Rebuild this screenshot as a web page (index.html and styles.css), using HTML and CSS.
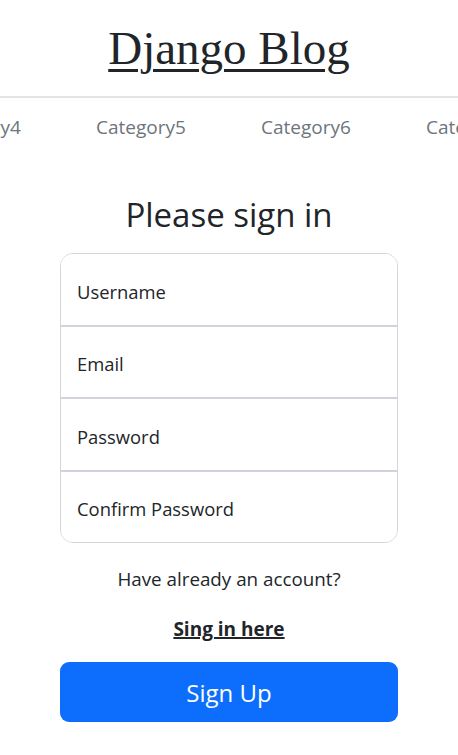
FILE: index.html
```html
<!DOCTYPE html>
<html lang="en">
<head>
<meta charset="utf-8">
<title>Django Blog</title>
<link rel="stylesheet" href="styles.css">
</head>
<body>
<header class="site-header">
  <a class="logo" href="#">Django Blog</a>
</header>
<nav class="cats">
  <div class="cats-track">
    <a href="#">Category4</a>
    <a href="#">Category5</a>
    <a href="#">Category6</a>
    <a href="#">Category7</a>
  </div>
</nav>
<main class="signin">
  <h1 class="signin-title">Please sign in</h1>
  <form class="signin-form">
    <div class="field-group">
      <input class="field" type="text" placeholder="Username">
      <input class="field" type="email" placeholder="Email">
      <input class="field" type="password" placeholder="Password">
      <input class="field" type="password" placeholder="Confirm Password">
    </div>
    <p class="hint">Have already an account?</p>
    <p class="hint-link"><a href="#">Sing in here</a></p>
    <button class="btn-primary" type="submit">Sign Up</button>
  </form>
</main>
</body>
</html>
```
FILE: styles.css
```css
* { box-sizing: border-box; }
html, body { margin: 0; padding: 0; }
body {
  font-family: "Open Sans", "Noto Sans", sans-serif;
  color: #212529;
  background: #fff;
  width: 458px;
  overflow: hidden;
}
.site-header {
  padding: 25px 0 24px;
  text-align: center;
  border-bottom: 2px solid #e4e4e4;
}
.logo {
  font-family: "Liberation Serif", "Times New Roman", serif;
  font-size: 47px;
  line-height: 47px;
  color: #212529;
  text-decoration: underline;
  text-decoration-thickness: 3px;
  text-underline-offset: 5px;
}
.cats {
  overflow: hidden;
  padding: 15px 0 0;
}
.cats-track {
  display: flex;
  margin-left: -69px;
}
.cats-track a {
  flex: 0 0 165px;
  font-size: 19px;
  line-height: 28px;
  color: #6c757d;
  text-decoration: none;
  white-space: nowrap;
}
.signin {
  display: flex;
  flex-direction: column;
  align-items: center;
  padding-top: 54px;
}
.signin-title {
  margin: 0 0 18px;
  font-size: 33px;
  line-height: 40px;
  font-weight: 400;
}
.signin-form {
  width: 338px;
  display: flex;
  flex-direction: column;
  align-items: center;
}
.field-group {
  width: 100%;
  border: 1px solid #d3d6db;
  border-radius: 13px;
  overflow: hidden;
  display: flex;
  flex-direction: column;
}
.field {
  height: 72.5px;
  border: 0;
  border-bottom: 2px solid #d0d4da;
  padding: 4px 16px 0;
  font-family: inherit;
  font-size: 18.4px;
  color: #212529;
  background: #fff;
  outline: none;
}
.field:last-child { border-bottom: 0; height: 70.5px; }
.field::placeholder { color: #212529; opacity: 1; }
.hint {
  margin: 22px 0 0;
  font-size: 18.8px;
  line-height: 28px;
}
.hint-link {
  margin: 22px 0 0;
  font-size: 19px;
  line-height: 28px;
  font-weight: 700;
}
.hint-link a {
  color: #212529;
  text-decoration: underline;
  text-decoration-thickness: 2px;
}
.btn-primary {
  margin-top: 19px;
  width: 100%;
  height: 60px;
  border: 0;
  border-radius: 9px;
  background: #0d6efd;
  color: #fff;
  font-family: inherit;
  font-size: 24px;
  cursor: pointer;
}
```
